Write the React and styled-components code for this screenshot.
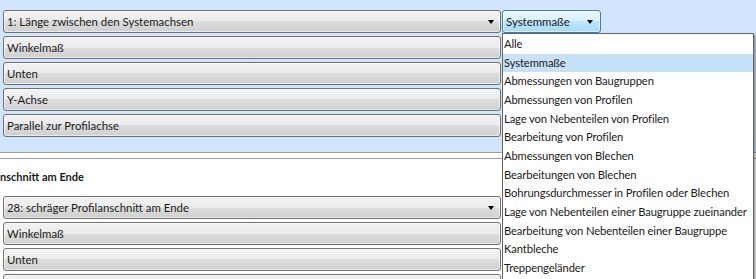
import React from "react";
import styled, { createGlobalStyle } from "styled-components";

const GlobalStyle = createGlobalStyle`
  html, body {
    margin: 0;
    padding: 0;
    background: #ffffff;
    overflow: hidden;
  }
  body {
    font-family: Lato, "Noto Sans", sans-serif;
    font-size: 11.4px;
    color: #1a1a1a;
  }
`;

const Page = styled.div`
  width: 756px;
  height: 279px;
  position: relative;
  overflow: hidden;
  background: #ffffff;
`;

const BluePanel = styled.div`
  background: #d0e5fb;
  padding: 10px 0 15px 3px;
  border-bottom: 1px solid #a0a0a0;
  display: flex;
  flex-direction: column;
  gap: 3px;
`;

const Divider = styled.div`
  height: 5px;
  border-bottom: 1px solid #a0a0a0;
`;

const WhitePanel = styled.div`
  padding: 0 0 0 3px;
  display: flex;
  flex-direction: column;
  gap: 3px;
`;

const SectionTitle = styled.div`
  font-weight: 700;
  font-size: 11px;
  margin-left: -3px;
  height: 34px;
  line-height: 35px;
`;

const Row = styled.div`
  display: flex;
  align-items: flex-start;
  gap: 1px;
  position: relative;
`;

const Button = styled.div`
  box-sizing: border-box;
  width: ${(p) => p.$width || 498}px;
  height: 23px;
  border: 1px solid ${(p) => (p.$active ? "#3c7fb1" : "#707070")};
  border-radius: 3px;
  background: ${(p) =>
    p.$active
      ? "linear-gradient(#eaf6fd 0%, #d9f0fc 50%, #bee6fd 50%, #a7d9f5 100%)"
      : "linear-gradient(#f2f2f2 0%, #ebebeb 50%, #dddddd 50%, #cfcfcf 100%)"};
  box-shadow: inset 0 0 0 1px rgba(255, 255, 255, 0.55);
  display: flex;
  align-items: center;
  padding: 0 ${(p) => (p.$active ? 7 : 6)}px 0 3px;
  white-space: nowrap;
  line-height: 21px;
`;

const Label = styled.span`
  flex: 1;
`;

const Arrow = styled.span`
  width: 0;
  height: 0;
  border-left: 3.5px solid transparent;
  border-right: 3.5px solid transparent;
  border-top: 4px solid #000;
  margin-top: 1px;
`;

const DropList = styled.ul`
  position: absolute;
  left: 502px;
  top: 33px;
  width: 250px;
  margin: 0;
  padding: 1px 0 1px;
  list-style: none;
  background: #ffffff;
  border: 1px solid #646464;
  box-shadow: 2px 2px 2px rgba(0, 0, 0, 0.35);
  z-index: 5;
`;

const Item = styled.li`
  height: 18.67px;
  line-height: 18.67px;
  padding-left: 1px;
  font-size: 11.2px;
  letter-spacing: -0.1px;
  white-space: nowrap;
  background: ${(p) => (p.$selected ? "#c7e1f8" : "transparent")};
`;

const topRows = ["Winkelmaß", "Unten", "Y-Achse", "Parallel zur Profilachse"];
const bottomRows = ["Winkelmaß", "Unten", ""];

const options = [
  "Alle",
  "Systemmaße",
  "Abmessungen von Baugruppen",
  "Abmessungen von Profilen",
  "Lage von Nebenteilen von Profilen",
  "Bearbeitung von Profilen",
  "Abmessungen von Blechen",
  "Bearbeitungen von Blechen",
  "Bohrungsdurchmesser in Profilen oder Blechen",
  "Lage von Nebenteilen einer Baugruppe zueinander",
  "Bearbeitung von Nebenteilen einer Baugruppe",
  "Kantbleche",
  "Treppengeländer",
];

export default function App() {
  return (
    <Page>
      <GlobalStyle />
      <BluePanel>
        <Row>
          <Button>
            <Label>1: Länge zwischen den Systemachsen</Label>
            <Arrow />
          </Button>
          <Button $width={99} $active>
            <Label>Systemmaße</Label>
            <Arrow />
          </Button>
        </Row>
        {topRows.map((t, i) => (
          <Row key={i}>
            <Button>
              <Label>{t}</Label>
            </Button>
          </Row>
        ))}
      </BluePanel>
      <Divider />
      <WhitePanel>
        <SectionTitle>nschnitt am Ende</SectionTitle>
        <Row>
          <Button>
            <Label>28: schräger Profilanschnitt am Ende</Label>
            <Arrow />
          </Button>
        </Row>
        {bottomRows.map((t, i) => (
          <Row key={i}>
            <Button>
              <Label>{t}</Label>
            </Button>
          </Row>
        ))}
      </WhitePanel>
      <DropList>
        {options.map((o, i) => (
          <Item key={i} $selected={i === 1}>
            {o}
          </Item>
        ))}
      </DropList>
    </Page>
  );
}
